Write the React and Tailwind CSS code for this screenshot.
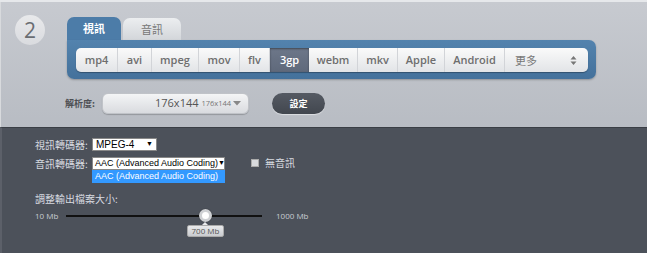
import React from "react";

const formats = [
  { t: "mp4", w: 42 },
  { t: "avi", w: 34 },
  { t: "mpeg", w: 47 },
  { t: "mov", w: 41 },
  { t: "flv", w: 30 },
  { t: "3gp", w: 39, active: true },
  { t: "webm", w: 49 },
  { t: "mkv", w: 40 },
  { t: "Apple", w: 47 },
  { t: "Android", w: 60 },
];

const cjk = { fontFamily: '"Noto Sans CJK TC", "Noto Sans", sans-serif' };
const arial = { fontFamily: '"Liberation Sans", Arial, sans-serif' };

export default function App() {
  return (
    <div className="w-[650px] h-[253px] bg-white overflow-hidden" style={{ fontFamily: '"Open Sans", "Noto Sans CJK TC", sans-serif' }}>
      <div className="w-[647px] h-[253px] flex flex-col border-t-2 border-[#e6e8eb]">
        {/* top section */}
        <div className="h-[125px] bg-gradient-to-b from-[#c7cad0] to-[#b8bcc3] flex border-l border-[#d8dadd]">
          <div className="w-[66px] pt-[13px] pl-[14px]">
            <div className="w-[30px] h-[30px] rounded-full bg-gradient-to-b from-[#e8e9eb] to-[#d9dbdf] flex items-center justify-center text-[#6a6d72] text-[21px] leading-none">2</div>
          </div>
          <div className="flex flex-col pt-[15px]">
            <div className="flex items-end gap-[2px] h-[23px]">
              <div className="w-[54px] h-[23px] bg-[#4c7ca8] rounded-t-[7px] flex items-center justify-center text-white text-[11px] font-bold" style={cjk}>視訊</div>
              <div className="w-[58px] h-[22px] bg-gradient-to-b from-[#eceef0] to-[#d3d6da] rounded-t-[7px] flex items-center justify-center text-[#777] text-[11px]" style={cjk}>音訊</div>
            </div>
            <div className="w-[529px] h-[39px] bg-gradient-to-b from-[#5383ae] to-[#44719b] rounded-b-[7px] rounded-tr-[7px] px-[9px] pt-[8px] shadow-[0_1px_2px_rgba(0,0,0,0.25)]">
              <div className="flex h-[24px] w-[512px] rounded-[5px] bg-gradient-to-b from-[#fafafa] to-[#e2e4e7] overflow-hidden shadow-[0_1px_1px_rgba(0,0,0,0.3)]">
                {formats.map((f) => (
                  <div
                    key={f.t}
                    style={{ width: f.w }}
                    className={
                      f.active
                        ? "h-full flex items-center justify-center text-[11px] font-semibold text-white bg-gradient-to-b from-[#6d7789] to-[#5f697b] shadow-[inset_0_1px_2px_rgba(0,0,0,0.4)]"
                        : "h-full flex items-center justify-center text-[11px] font-semibold text-[#6e6e6e] border-r border-[#d2d4d8]"
                    }
                  >
                    {f.t}
                  </div>
                ))}
                <div className="flex-1 flex items-center justify-between pl-[10px] pr-[11px] text-[11px] text-[#777]">
                  <span style={cjk}>更多</span>
                  <svg width="7" height="11" viewBox="0 0 7 11"><path d="M3.5 1 L6.5 4.5 H0.5 Z M3.5 10 L6.5 6.5 H0.5 Z" fill="#777" /></svg>
                </div>
              </div>
            </div>
            <div className="flex items-center mt-[14px] -ml-[2px]">
              <span className="text-[9px] font-bold text-[#4d4f53] w-[37px]" style={cjk}>解析度:</span>
              <div className="w-[147px] h-[21px] rounded-[6px] bg-gradient-to-b from-[#f4f5f6] to-[#d9dbdf] border border-[#c0c3c8] shadow-[0_1px_1px_rgba(0,0,0,0.2)] flex items-center pl-[52px] pr-[7px] whitespace-nowrap">
                <span className="text-[11px] text-[#555]">176x144</span>
                <span className="text-[7.5px] text-[#777] ml-[3px]">176x144</span>
                <svg className="ml-auto" width="8" height="5" viewBox="0 0 8 5"><path d="M0 0 H8 L4 4.5 Z" fill="#888" /></svg>
              </div>
              <div className="ml-[23px] w-[53px] h-[21px] rounded-full bg-gradient-to-b from-[#555a63] to-[#42474f] flex items-center justify-center text-white text-[9px] font-bold shadow-[0_1px_1px_rgba(255,255,255,0.5)]" style={cjk}>設定</div>
            </div>
          </div>
        </div>
        {/* dark section */}
        <div className="flex-1 bg-[#4c515a] border-t border-[#3a3e45] border-l-2 border-l-[#5c6069] pl-[33px] pt-[10px] text-[#d8dbe0] relative">
          <div className="flex items-center h-[13px]">
            <span className="text-[10px] w-[57px]" style={cjk}>視訊轉碼器:</span>
            <div className="w-[65px] h-[13px] bg-white border border-[#888] flex items-center pl-[3px] pr-[3px] text-black text-[10px] whitespace-nowrap" style={arial}>
              MPEG-4
              <span className="ml-auto text-[7px]">▼</span>
            </div>
          </div>
          <div className="flex items-start mt-[6px]">
            <span className="text-[10px] w-[57px] h-[13px] flex items-center" style={cjk}>音訊轉碼器:</span>
            <div className="flex flex-col w-[133px]" style={arial}>
              <div className="h-[13px] bg-white border border-[#888] flex items-center pl-[2px] pr-[3px] text-black text-[9px] whitespace-nowrap">
                AAC (Advanced Audio Coding)
                <span className="ml-auto text-[7px]">▼</span>
              </div>
              <div className="h-[13px] bg-[#3399ff] text-white text-[9px] flex items-center pl-[2px] border border-[#3399ff] whitespace-nowrap">AAC (Advanced Audio Coding)</div>
            </div>
            <div className="flex items-center ml-[26px] h-[13px] -mt-[1px]">
              <div className="w-[8px] h-[8px] bg-[#d8dadd] border border-[#aaa]" />
              <span className="ml-[6px] text-[10px]" style={cjk}>無音訊</span>
            </div>
          </div>
          <div className="mt-[9px] text-[10px] h-[13px] flex items-center" style={cjk}>調整輸出檔案大小:</div>
          <div className="flex items-center mt-[5px] h-[12px] text-[8px] text-[#c8ccd2] whitespace-nowrap">
            <span className="w-[31px]">10 Mb</span>
            <div className="relative w-[196px] h-[2px] bg-[#111]">
              <div className="absolute left-[133px] top-[-6px] w-[13px] h-[13px] rounded-full bg-white border-[3px] border-[#cfd1d4] shadow-[0_0_1px_rgba(0,0,0,0.6)]" />
              <div className="absolute left-[121px] top-[10px] w-[37px] h-[12px] bg-gradient-to-b from-[#e9eaec] to-[#c9cbcf] border border-[#aaa] rounded-[2px] text-[8px] text-[#555] flex items-center justify-center">
                700 Mb
              </div>
              <div className="absolute left-[136px] top-[7px] w-0 h-0 border-l-[3px] border-r-[3px] border-b-[3px] border-l-transparent border-r-transparent border-b-[#e9eaec]" />
            </div>
            <span className="ml-[14px]">1000 Mb</span>
          </div>
        </div>
      </div>
    </div>
  );
}
